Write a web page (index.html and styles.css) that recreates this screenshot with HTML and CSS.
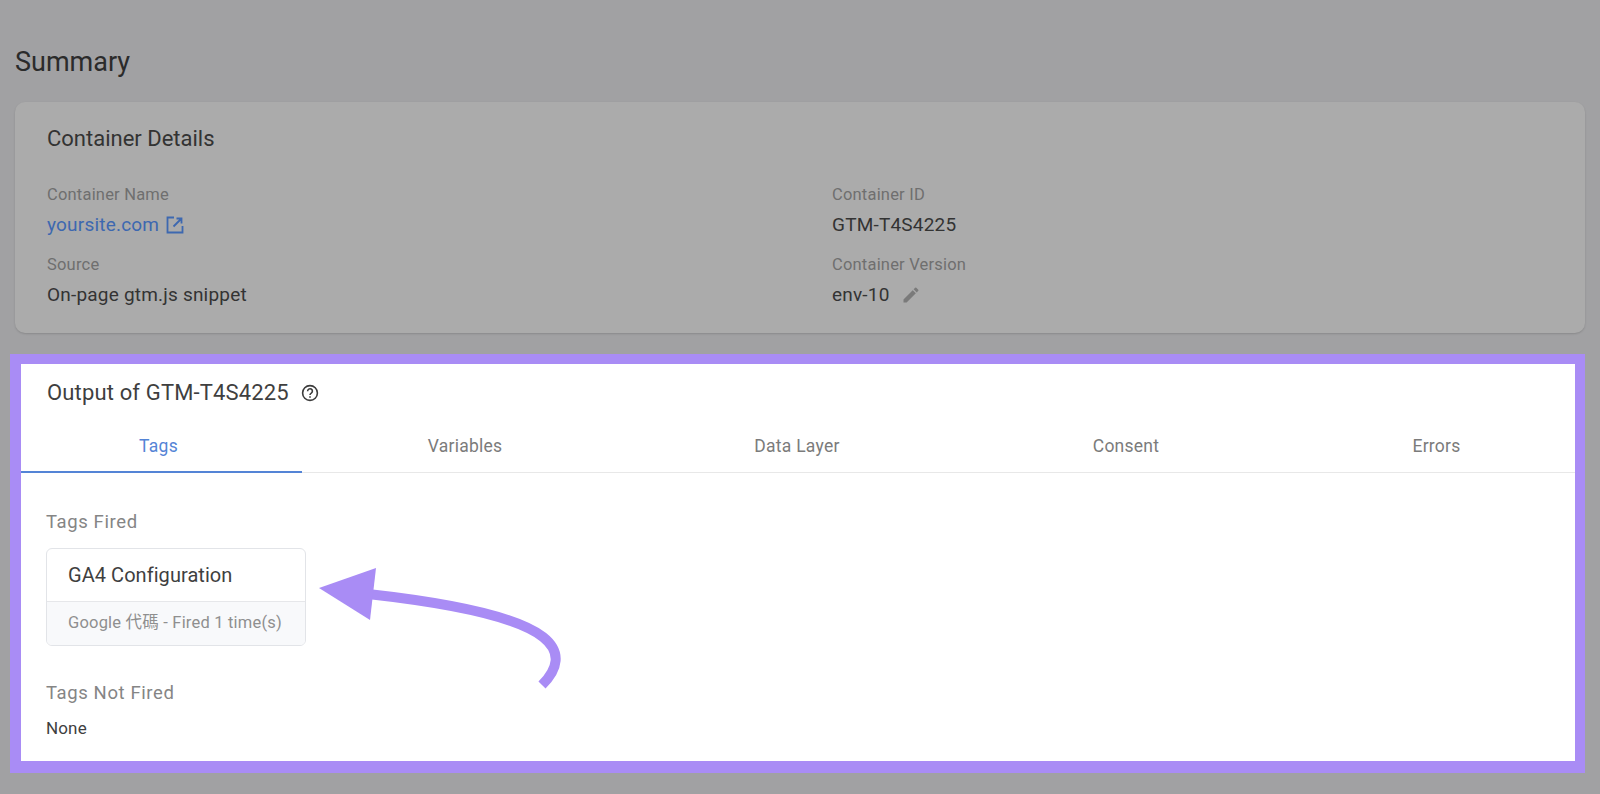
FILE: index.html
```html
<!DOCTYPE html>
<html lang="en">
<head>
  <meta charset="UTF-8" />
  <title>Summary</title>
  <meta name="viewport" content="width=device-width, initial-scale=1.0" />
  <link rel="stylesheet" href="styles.css">
</head>
<body>

  <h1 class="page-title">Summary</h1>

  <!-- Container details -->
  <section class="details">
    <h2 class="details-title">Container Details</h2>
    <div class="details-grid">
      <div class="field">
        <div class="field-label">Container Name</div>
        <div class="field-value link">yoursite.com
          <svg class="icon-open" xmlns="http://www.w3.org/2000/svg" viewBox="0 0 18 18" fill="none" stroke="#3d68b0" stroke-width="1.8">
            <path d="M8 1.5H1.5v15h15V10"/>
            <path d="M10.5 2.5h5v5M15.5 2.5 7.5 10.5"/>
          </svg>
        </div>
      </div>
      <div class="field">
        <div class="field-label">Container ID</div>
        <div class="field-value">GTM-T4S4225</div>
      </div>
      <div class="field">
        <div class="field-label">Source</div>
        <div class="field-value">On-page gtm.js snippet</div>
      </div>
      <div class="field">
        <div class="field-label">Container Version</div>
        <div class="field-value">env-10
          <svg class="icon-edit" xmlns="http://www.w3.org/2000/svg" viewBox="0 0 24 24" fill="#7a7a7a">
            <path d="M3 17.25V21h3.75L17.81 9.94l-3.75-3.75L3 17.25zM20.71 7.04a1 1 0 0 0 0-1.41l-2.34-2.34a1 1 0 0 0-1.41 0l-1.83 1.83 3.75 3.75 1.83-1.83z"/>
          </svg>
        </div>
      </div>
    </div>
  </section>

  <!-- Output panel -->
  <section class="output">
    <div class="output-title">
      <span>Output of GTM-T4S4225</span>
      <svg class="icon-help" xmlns="http://www.w3.org/2000/svg" viewBox="0 0 18 18" fill="none" stroke="#3c3c3c" stroke-width="1.6">
        <circle cx="9" cy="9" r="7.4"/>
        <path d="M6.6 7.2a2.4 2.4 0 1 1 3.7 2c-.8.5-1.3 1-1.3 1.9"/>
        <path d="M9 12.3v1.5"/>
      </svg>
    </div>

    <nav class="tabs">
      <div class="tab active">Tags</div>
      <div class="tab">Variables</div>
      <div class="tab">Data Layer</div>
      <div class="tab">Consent</div>
      <div class="tab last">Errors</div>
    </nav>

    <div class="output-body">
      <div class="group-label">Tags Fired</div>
      <div class="tag-card">
        <div class="tag-name">GA4 Configuration</div>
        <div class="tag-meta">Google 代碼 - Fired 1 time(s)</div>
      </div>
      <div class="group-label not-fired">Tags Not Fired</div>
      <div class="none">None</div>
    </div>
  </section>

  <!-- Arrow annotation -->
  <svg class="arrow" xmlns="http://www.w3.org/2000/svg" viewBox="0 0 1600 794">
    <path d="M368 594C440 602 515 615 543 637C562 652 558 669 542 685" fill="none" stroke="#a98cf5" stroke-width="10"/>
    <path d="M319 588 376 568 370 620z" fill="#a98cf5"/>
  </svg>

</body>
</html>
```

FILE: styles.css
```css
* { box-sizing: border-box; margin: 0; padding: 0; }

body {
  width: 1600px;
  height: 794px;
  overflow: hidden;
  position: relative;
  background: #a1a1a3;
  font-family: Roboto, 'Noto Sans CJK TC', sans-serif;
  color: #262626;
}

.page-title {
  font-size: 27px;
  font-weight: 400;
  line-height: 34px;
  padding: 45px 0 0 15px;
  height: 102px;
  color: #2b2b2b;
}

/* Container details */
.details {
  margin: 0 15px;
  height: 231px;
  padding: 23px 32px 0;
  background: #ababab;
  border-radius: 10px;
  box-shadow: 0 1px 2px rgba(0,0,0,0.15);
}

.details-title {
  font-size: 22px;
  font-weight: 400;
  line-height: 28px;
  color: #333;
}

.details-grid {
  display: grid;
  grid-template-columns: 785px 1fr;
  row-gap: 15px;
  margin-top: 31px;
}

.field-label {
  font-size: 16.5px;
  line-height: 22px;
  letter-spacing: 0.2px;
  color: #6f6f6f;
}

.field-value {
  display: flex;
  align-items: center;
  gap: 7px;
  font-size: 19px;
  line-height: 29px;
  margin-top: 4px;
  letter-spacing: 0.2px;
  color: #333;
}

.field-value.link { color: #3d68b0; }

.icon-open { width: 18px; height: 18px; }
.icon-edit { width: 20px; height: 20px; margin-left: 4px; }

/* Output panel */
.output {
  margin: 21px 15px 0 10px;
  height: 419px;
  border: solid #a98cf5;
  border-width: 10px 10px 12px 11px;
  background: #fff;
}

.output-title {
  display: flex;
  align-items: center;
  gap: 12px;
  padding: 14px 0 0 26px;
  font-size: 22px;
  line-height: 30px;
  letter-spacing: 0.15px;
  color: #3f3f3f;
}

.icon-help { width: 18px; height: 18px; }

.tabs {
  display: grid;
  grid-template-columns: 281px 326px 338px 320px 1fr;
  margin-top: 18px;
  border-bottom: 1px solid #e8e8e8;
}

.tab {
  height: 46px;
  padding-top: 8px;
  text-align: center;
  font-size: 17.5px;
  line-height: 24px;
  letter-spacing: 0.25px;
  color: #7b7b7b;
}

.tab.active {
  padding-right: 6px;
  color: #5484d6;
  border-bottom: 2px solid #5484d6;
  margin-bottom: -1px;
  height: 47px;
}

.tab.last { padding-left: 12px; }

.output-body { padding: 37px 0 0 25px; }

.group-label {
  font-size: 18.5px;
  line-height: 24px;
  letter-spacing: 0.6px;
  color: #858585;
}

.not-fired { margin-top: 35px; }

.tag-card {
  width: 260px;
  height: 98px;
  margin-top: 14px;
  border: 1px solid #e2e4e8;
  border-radius: 6px;
  overflow: hidden;
}

.tag-name {
  height: 53px;
  padding: 0 0 0 21px;
  font-size: 20px;
  line-height: 52px;
  letter-spacing: 0.05px;
  color: #3f3f3f;
  border-bottom: 1px solid #e6e7ea;
}

.tag-meta {
  height: 43px;
  padding-left: 21px;
  font-size: 16.5px;
  line-height: 41px;
  letter-spacing: 0.2px;
  color: #8f8f8f;
  background: #f8f9fb;
}

.none {
  margin-top: 11px;
  font-size: 17px;
  line-height: 24px;
  letter-spacing: 0.15px;
  color: #3f3f3f;
}

/* Arrow annotation sits over the panel */
.arrow {
  position: absolute;
  top: 0;
  left: 0;
  width: 1600px;
  height: 794px;
  pointer-events: none;
}
```
